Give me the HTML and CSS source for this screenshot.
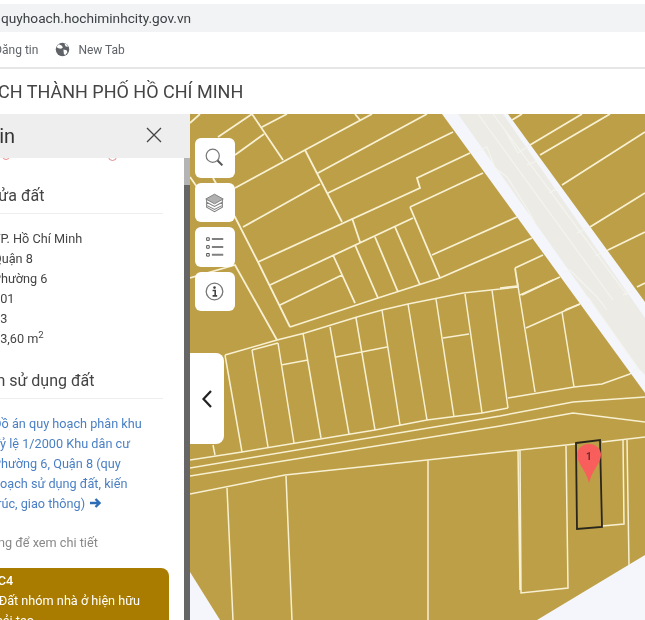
FILE: index.html
```html
<!DOCTYPE html>
<html lang="vi">
<head>
<meta charset="utf-8">
<title>Quy hoạch</title>
<link rel="stylesheet" href="styles.css">
</head>
<body>
<div class="app">
  <div class="addr"><span class="addr-text">quyhoach.hochiminhcity.gov.vn</span></div>
  <div class="bookmarks">
    <span class="bm-first">Đăng tin</span>
    <svg class="globe" viewBox="0 0 16 16"><circle cx="8" cy="8" r="7.2" fill="#5f6368"/><path d="M4 2.5l3 1.2 1.5 2-2 1.6-3-.6-2-1.5zM9 8l3.4.8.8 2-2.4 3.2-1.4-1.6zM10 1.4l2.8 1.4 1 2.4-2.6-.8z" fill="#fff"/></svg>
    <span class="bm-tab">New Tab</span>
  </div>
  <div class="title"><span class="title-text">QUY HOẠCH THÀNH PHỐ HỒ CHÍ MINH</span></div>
  <main class="main">
    <aside class="panel">
      <header class="panel-head">
        <span class="panel-title">Thông tin</span>
        <svg class="close" viewBox="0 0 16 16"><path d="M1 1l14 14M15 1L1 15" stroke="#444" stroke-width="1.3" fill="none"/></svg>
      </header>
      <div class="panel-scroll">
        <div class="panel-body">
          <div class="red-line"><span class="red-bit left"></span><span class="red-bit right"></span></div>
          <h2 class="sec sec-land">Thửa đất</h2>
          <ul class="values">
            <li>TP. Hồ Chí Minh</li>
            <li>Quận 8</li>
            <li>Phường 6</li>
            <li>101</li>
            <li>13</li>
            <li>53,60 m<sup>2</sup></li>
          </ul>
          <h2 class="sec sec-use">Thông tin sử dụng đất</h2>
          <p class="link">Đồ án quy hoạch phân khu<br>Tỷ lệ 1/2000 Khu dân cư<br>Phường 6, Quận 8 (quy<br>hoạch sử dụng đất, kiến<br><span class="link-last">trúc, giao thông) <svg class="arrow" viewBox="0 0 12 12"><path d="M1 6h9M6.5 2l4 4-4 4" stroke="#2d6db5" stroke-width="2.4" fill="none"/></svg></span></p>
          <p class="hint">Chạm vào vùng để xem chi tiết</p>
          <div class="card">
            <strong class="card-code">ONC4</strong>
            <span class="card-line">- Đất nhóm nhà ở hiện hữu</span>
            <span class="card-line card-cut">cải tạo</span>
          </div>
        </div>
        <div class="scrollbar"></div>
      </div>
    </aside>
    <section class="map">
      <svg class="map-art" viewBox="190 114 455 506" preserveAspectRatio="none">
        <rect x="190" y="114" width="455" height="506" fill="#bc9f46"/>
        <path d="M190 572L220 620H190zM537 620L645 555V620z" fill="#f4f6fb"/>
        <path d="M442 114H508L645 302V393z" fill="#f4f6fb"/>
        <path d="M458 114H503L645 318V375L638 368z" fill="#ecebe5"/>
        <path class="road-line" d="M472 153L487 147L495 168L507 177L528 210L535 223M478 114L613 300M493 114L627 295M503 127L518 153L530 145M527 165L539 160M549 193L560 187M577 233L590 227M595 256L608 250M563 272L570 270L597 297L607 310M588 297L638 368L630 374M623 295L635 290"/>
        <path class="parcel thick" d="M190 123L200 114M218 137L252 114M252 114L283 160M262 127L287 114M235 155L264 134M235 188L305 150L372 114M355 114L360 120M305 150L342 222M318 173L427 114M328 193L453 132M243 227L320 184M258 262L420 188L417 178L470 153M190 177L197 187M213 178L235 217L258 262L290 327M190 278L235 265L277 340M270 285L413 218M280 305L342 275M290 327L378 298L440 278L532 238M333 255L355 303M355 245L378 298M375 237L398 292M395 227L420 285M410 207L440 278M410 207L483 173M352 218L360 242M432 255L517 217M515 268L543 255M515 268L518 287M520 295L560 277M565 310L580 304M512 120L522 114M530 145L582 114M540 155L610 114M562 185L645 132M590 227L645 193M608 250L645 232M637 287L645 283"/>
        <path class="parcel" d="M225 355L277 340L305 333L357 317L382 310L408 304L463 293L518 287M252 350L278 343M225 355L242 452M252 350L268 447M278 343L294 443M303 333L321 438M330 327L349 434M356 318L375 430M382 310L400 425M408 304L427 420M436 299L454 417M465 294L482 413M492 290L508 408M281 365L308 360M336 357L387 347M443 338L469 334M190 460L242 452L375 430L427 420L482 413L508 408M508 398L574 387L602 384L630 374M190 468L500 416L573 402L645 397M190 476L500 426L573 413L645 422M190 494L285 475L427 460L575 444M602 442L645 437M227 488L233 620M286 476L292 620M428 460V620M518 450L520 590M213 445L215 455M517 280L535 392M522 295L553 280M526 328L580 304M562 312L574 387M500 288L517 286M520 450L521 593L568 588L566 446M602 526L624 524L623 439M627 439L629 565"/>
        <path d="M576 443L600 440L602 527L577 529z" fill="none" stroke="#2a261c" stroke-width="1.8"/>
        <path d="M589 444C581 444 577 450 577 455C577 463 586 470 589 483C592 470 601 463 601 455C601 450 597 444 589 444z" fill="#f85f5c"/>
      </svg>
      <span class="pin-num">1</span>
      <div class="tools">
        <button class="tool" type="button"><svg viewBox="0 0 24 24"><circle cx="10" cy="10" r="7.5" fill="none" stroke="#777" stroke-width="1.4"/><path d="M15.5 15.5L21 21" stroke="#555" stroke-width="2.4"/></svg></button>
        <button class="tool" type="button"><svg viewBox="0 0 24 24"><path d="M12 2.500L22 8L12 13.500L2 8z" fill="#b0b0b0" stroke="#777"/><path d="M2.500 11.500L12 16.500L21.500 11.500M2.500 15L12 20L21.500 15M3 8.500V17.500L12 22.500L21 17.500V8.500" fill="none" stroke="#808080" stroke-width="1.200"/></svg></button>
        <button class="tool" type="button"><svg viewBox="0 0 24 24"><path d="M3 2h3v3H3zM3 11h3v3H3zM3 20h3v3H3z" fill="#fff" stroke="#444" stroke-width="1"/><path d="M9 3.500h13M9 12.500h13M9 21.500h13" stroke="#808080" stroke-width="2.200"/></svg></button>
        <button class="tool" type="button"><svg viewBox="0 0 24 24"><circle cx="12" cy="12" r="9.500" fill="none" stroke="#777" stroke-width="1.500"/><circle cx="12" cy="7.500" r="1.500" fill="#444"/><path d="M9.800 10.800H12.800V16.800M9.800 17H15" fill="none" stroke="#444" stroke-width="1.800"/></svg></button>
      </div>
      <button class="collapse" type="button"><svg viewBox="0 0 12 20"><path d="M10 2L2.500 10L10 18" fill="none" stroke="#222" stroke-width="2.200"/></svg></button>
    </section>
  </main>
</div>
</body>
</html>
```
FILE: styles.css
```css
* { box-sizing: border-box; }
html, body { margin: 0; padding: 0; background: #fff; }
body { font-family: Roboto, "Noto Sans", sans-serif; color: #444; overflow: hidden; }
.app { width: 645px; height: 620px; overflow: hidden; display: flex; flex-direction: column; padding-top: 4px; filter: blur(0.35px); }

.addr { height: 28px; flex: none; background: #f1f3f4; display: flex; align-items: center; padding-left: 1px; }
.addr-text { font-size: 13.7px; color: #3c4043; white-space: nowrap; }

.bookmarks { height: 37px; flex: none; display: flex; align-items: center; border-bottom: 2px solid #e6e6e6; font-size: 12px; color: #5f6368; white-space: nowrap; }
.bm-first { margin-left: -6px; }
.globe { width: 15px; height: 15px; margin-left: 17px; }
.bm-tab { margin-left: 8px; }

.title { height: 45px; flex: none; display: flex; align-items: center; white-space: nowrap; overflow: hidden; }
.title-text { font-size: 18px; color: #444; margin-left: -78px; }

.main { flex: 1; display: flex; min-height: 0; }
.panel { width: 190px; flex: none; display: flex; flex-direction: column; background: #fff; overflow: hidden; }
.panel-head { height: 44px; flex: none; background: #eeeeee; display: flex; align-items: center; justify-content: space-between; padding-right: 28px; }
.panel-title { font-size: 20px; color: #333; margin-left: -69px; white-space: nowrap; }
.close { width: 16px; height: 16px; margin-top: -3px; }

.panel-scroll { flex: 1; display: flex; min-height: 0; }
.panel-body { width: 184px; flex: none; position: relative; }
.scrollbar { width: 6px; flex: none; background: #666; border-top: 27px solid #b4b4b4; }

.red-line { height: 4px; position: relative; overflow: hidden; }
.red-bit { position: absolute; top: -6px; width: 8px; height: 8px; border-radius: 50%; border: 1px solid #e98a8a; }
.red-bit.left { left: 2px; }
.red-bit.right { left: 108px; width: 9px; height: 9px; }

.sec { margin: 0; font-weight: 400; font-size: 16px; color: #444; white-space: nowrap; line-height: 22px; }
.sec-land { margin: 23px 21px 0 -20px; height: 29px; border-bottom: 1px solid #eee; }
.values { list-style: none; margin: 15px 0 0 -7px; padding: 0; font-size: 12.7px; line-height: 20px; color: #444; }
.values sup { font-size: 9.5px; line-height: 0; }
.sec-use { margin: 21px 21px 0 -62px; height: 29px; border-bottom: 1px solid #eee; }
.link { margin: 15px 0 0 -7px; font-size: 12.7px; line-height: 20px; color: #4a7fc4; white-space: nowrap; }
.arrow { width: 12px; height: 12px; vertical-align: -1px; margin-left: 1px; }
.hint { margin: 19px 0 0 -75px; font-size: 12.7px; line-height: 20px; color: #888; white-space: nowrap; }
.card { margin: 15px 15px 0 -20px; background: #a97c00; border-radius: 8px; height: 80px; padding: 3px 0 0 20px; color: #fff; font-size: 12.7px; line-height: 20px; display: flex; flex-direction: column; white-space: nowrap; }
.card-code { margin-left: -20px; font-weight: 500; }
.card-line { margin-left: -8px; }
.card-cut { margin-left: -4px; }

.map { flex: 1; position: relative; overflow: hidden; min-width: 0; }
.map-art { position: absolute; inset: 0; width: 100%; height: 100%; display: block; }
.parcel { fill: none; stroke: #f8f0d2; stroke-width: 1.5; }
.parcel.thick { stroke-width: 1.8; }
.road-line { fill: none; stroke: #f4f4f0; stroke-width: 1.2; }
.pin-num { position: absolute; left: 396px; top: 337px; font-size: 10px; font-weight: 700; color: #6d2a2a; }

.tools { position: absolute; left: 5px; top: 24px; display: flex; flex-direction: column; gap: 5px; }
.tool { width: 39.5px; height: 39.5px; padding: 0; border: 0; border-radius: 6px; background: #fff; display: flex; align-items: center; justify-content: center; }
.tool svg { width: 21px; height: 21px; }
.collapse { position: absolute; left: 0; top: 239px; width: 34px; height: 91px; padding: 0; border: 0; border-radius: 0 8px 8px 0; background: #fff; display: flex; align-items: center; justify-content: center; }
.collapse svg { width: 12px; height: 20px; }
```
